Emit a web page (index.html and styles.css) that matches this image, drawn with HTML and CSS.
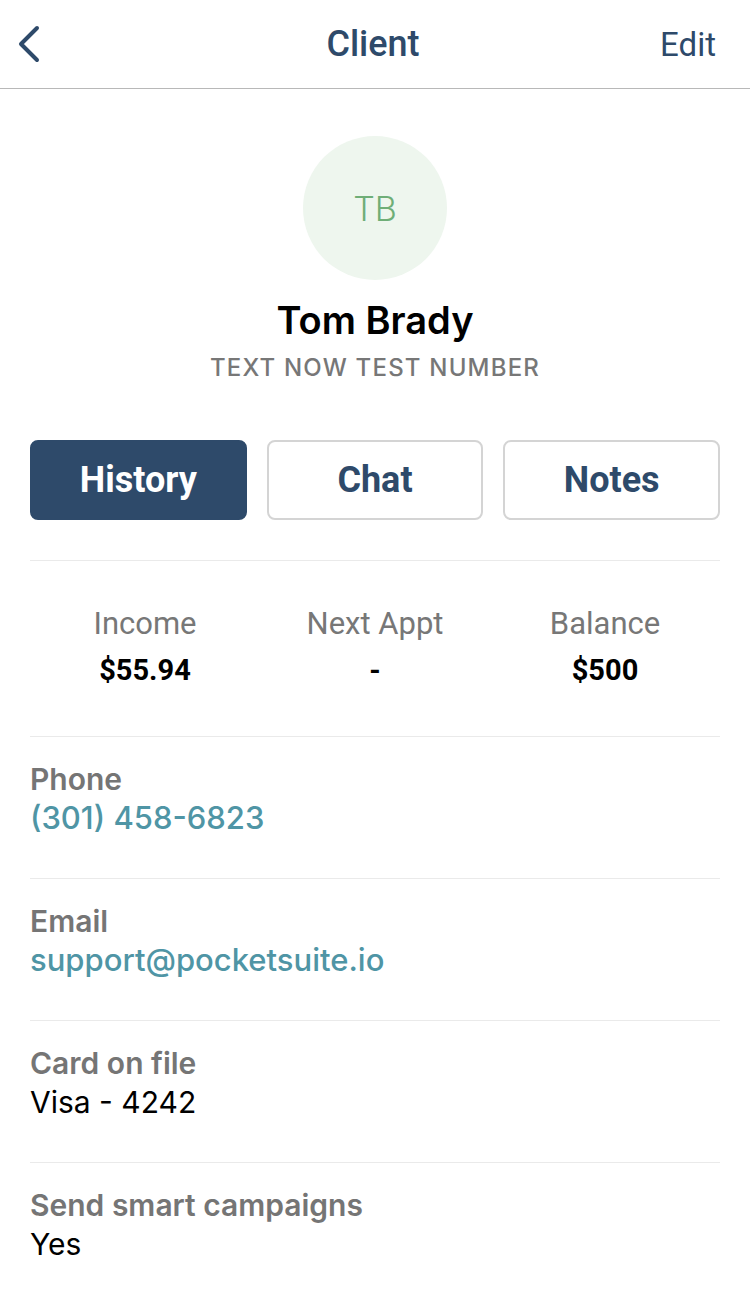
FILE: index.html
```html
<!DOCTYPE html>
<html lang="en">
<head>
  <meta charset="UTF-8" />
  <meta name="viewport" content="width=device-width, initial-scale=1.0"/>
  <title>Client</title>
  <link rel="stylesheet" href="styles.css">
</head>
<body>
  <div class="topbar">
    <a class="back" href="#">
      <svg width="26" height="40" viewBox="0 0 26 40">
        <path d="M21 4 L5 20 L21 36" fill="none" stroke="#2e4a6a" stroke-width="4" stroke-linecap="round" stroke-linejoin="round"/>
      </svg>
    </a>
    <div class="title">Client</div>
    <a class="edit" href="#">Edit</a>
  </div>

  <div class="profile">
    <div class="avatar">TB</div>
    <div class="name">Tom Brady</div>
    <div class="subtitle">TEXT NOW TEST NUMBER</div>
  </div>

  <div class="tabs">
    <button class="tab active">History</button>
    <button class="tab">Chat</button>
    <button class="tab">Notes</button>
  </div>

  <div class="stats">
    <div class="stat">
      <div class="stat-label">Income</div>
      <div class="stat-value">$55.94</div>
    </div>
    <div class="stat">
      <div class="stat-label">Next Appt</div>
      <div class="stat-value">-</div>
    </div>
    <div class="stat">
      <div class="stat-label">Balance</div>
      <div class="stat-value">$500</div>
    </div>
  </div>

  <div class="field">
    <div class="field-label">Phone</div>
    <div class="field-value link">(301) 458-6823</div>
  </div>
  <div class="field">
    <div class="field-label">Email</div>
    <div class="field-value link">support@pocketsuite.io</div>
  </div>
  <div class="field">
    <div class="field-label">Card on file</div>
    <div class="field-value">Visa - 4242</div>
  </div>
  <div class="field last">
    <div class="field-label">Send smart campaigns</div>
    <div class="field-value">Yes</div>
  </div>
</body>
</html>
```

FILE: styles.css
```css
body {
  margin: 0;
  font-family: Inter, 'Noto Sans', sans-serif;
  background-color: #fff;
  color: #000;
}

.topbar {
  height: 88px;
  border-bottom: 1px solid #b8b8b8;
  display: grid;
  grid-template-columns: 1fr auto 1fr;
  align-items: center;
  padding: 0 34px 0 16px;
  font-family: Roboto, sans-serif;
  color: #2e4a6a;
}

.back {
  display: flex;
}

.title {
  font-size: 36px;
  font-weight: 500;
  margin-left: 14px;
}

.edit {
  justify-self: end;
  font-size: 33px;
  color: #2e4a6a;
  text-decoration: none;
}

.profile {
  display: flex;
  flex-direction: column;
  align-items: center;
  padding-top: 47px;
}

.avatar {
  width: 144px;
  height: 144px;
  border-radius: 50%;
  background-color: #eef6ee;
  color: #6fae77;
  font-size: 34px;
  font-weight: 300;
  display: flex;
  align-items: center;
  justify-content: center;
}

.name {
  margin-top: 17px;
  font-size: 38px;
  font-weight: 600;
  line-height: 46px;
}

.subtitle {
  margin-top: 10px;
  font-size: 24px;
  font-weight: 500;
  color: #777;
  letter-spacing: 1.2px;
  line-height: 30px;
}

.tabs {
  display: grid;
  grid-template-columns: repeat(3, 1fr);
  gap: 20px;
  margin: 57px 30px 0;
  padding-bottom: 40px;
  border-bottom: 1px solid #eaeaea;
}

.tab {
  height: 80px;
  border: 2px solid #d4d4d4;
  border-radius: 8px;
  background-color: #fff;
  color: #2e4a6a;
  font-family: Roboto, sans-serif;
  font-size: 36px;
  font-weight: 700;
}

.tab.active {
  background-color: #2e4a6a;
  border-color: #2e4a6a;
  color: #fff;
}

.stats {
  display: grid;
  grid-template-columns: repeat(3, 1fr);
  margin: 0 30px;
  padding: 45px 0 50px;
  border-bottom: 1px solid #eaeaea;
  text-align: center;
  font-family: Roboto, sans-serif;
}

.stat-label {
  font-size: 31px;
  color: #777;
  line-height: 36px;
}

.stat-value {
  margin-top: 12px;
  font-size: 29px;
  font-weight: 700;
  line-height: 32px;
}

.field {
  margin: 0 30px;
  padding: 24px 0 41px;
  border-bottom: 1px solid #eaeaea;
}

.field.last {
  border-bottom: none;
}

.field-label {
  font-size: 30px;
  font-weight: 600;
  color: #757575;
  line-height: 36px;
}

.field-value {
  margin-top: 2px;
  font-size: 30px;
  line-height: 38px;
}

.field-value.link {
  color: #4f95a5;
  font-weight: 500;
  font-size: 31px;
}
```
